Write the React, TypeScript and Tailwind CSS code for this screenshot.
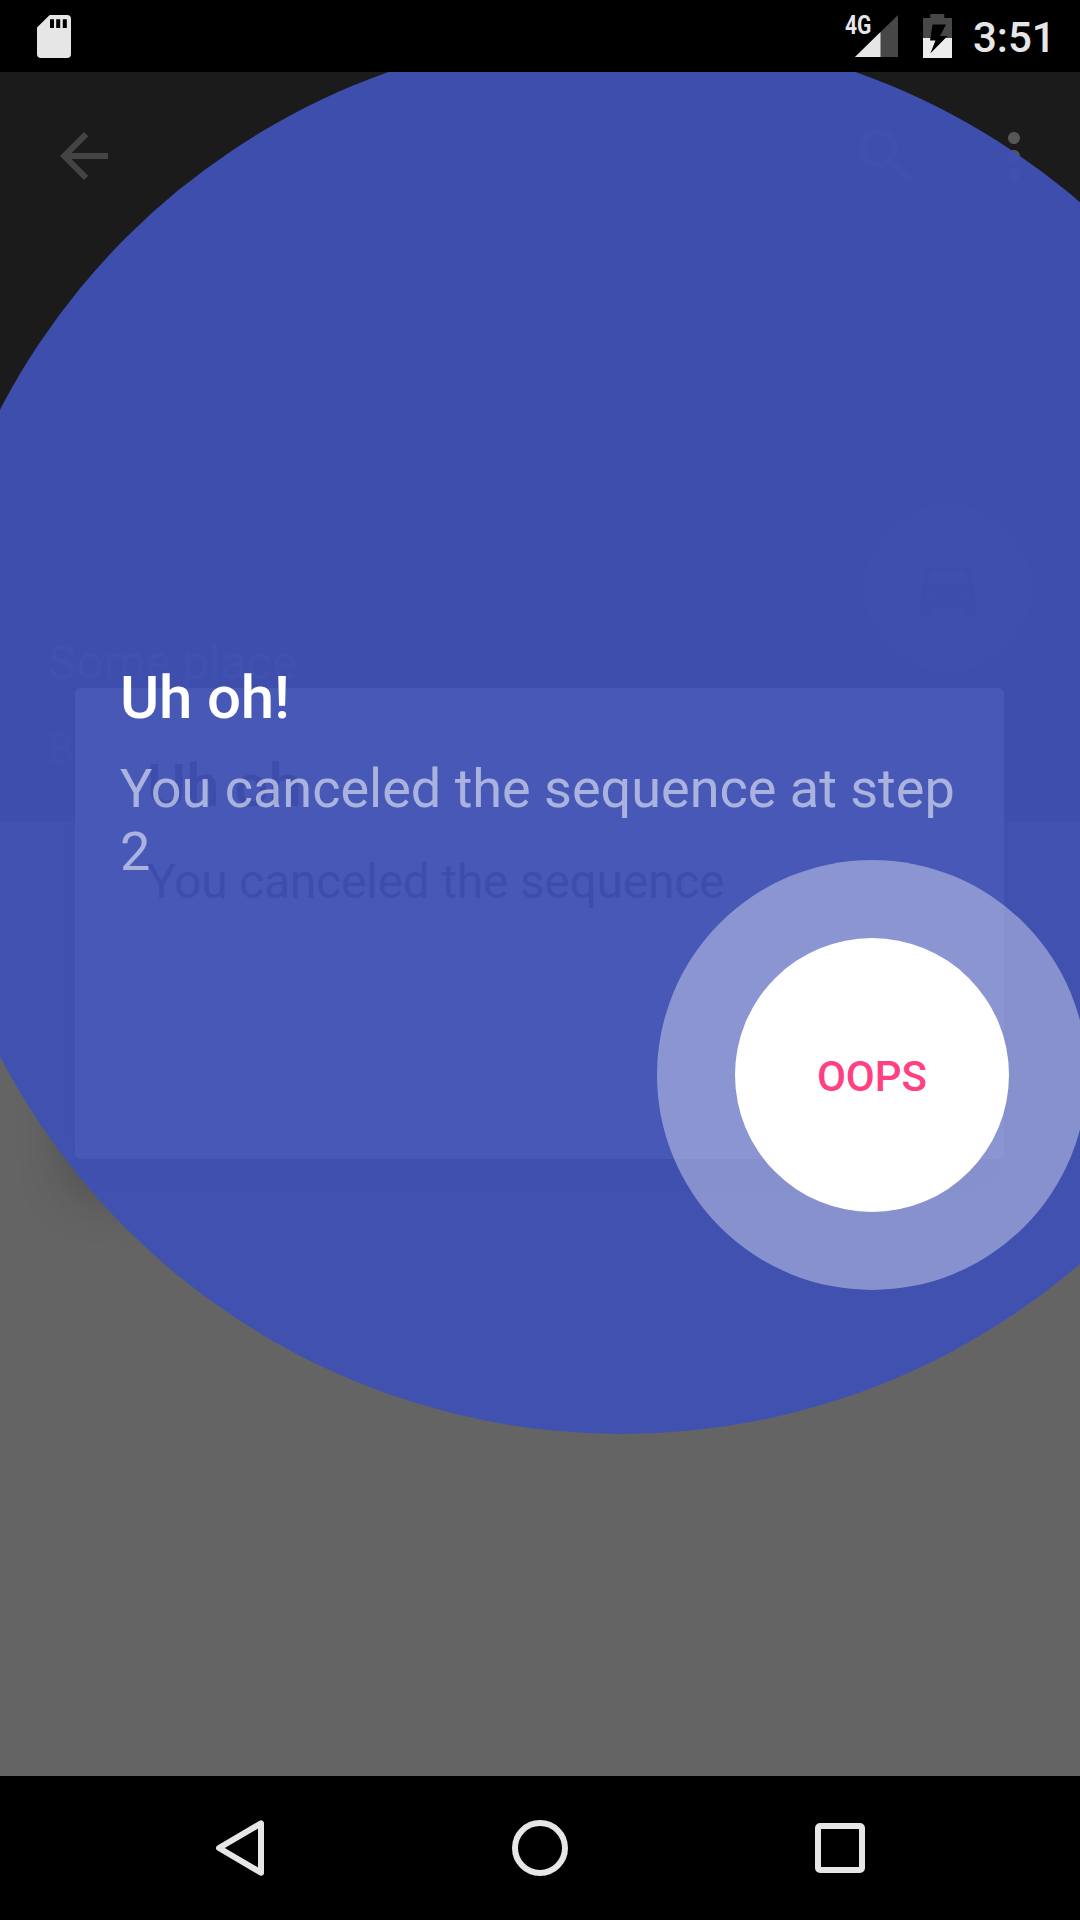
import React from "react";

function StatusBar() {
  return (
    <header className="flex h-[72px] shrink-0 items-start bg-black text-[#e6e6e6]">
      <svg className="ml-[37px] mt-[14.5px] h-[43px] w-[34px]" viewBox="0 0 34 43" fill="#e6e6e6">
        <path fillRule="evenodd" d="M12.7 0H30a4 4 0 0 1 4 4v35a4 4 0 0 1-4 4H4a4 4 0 0 1-4-4V12.5ZM13 4.3V13h4V4.3ZM19.2 4.3V13h4V4.3ZM25.8 4.3V13h4V4.3Z" />
      </svg>
      <span className="ml-[774px] mt-[10px] w-[26px] origin-left scale-x-[0.81] whitespace-nowrap text-[26px] leading-[30px] font-bold">4G</span>
      <svg className="-ml-[16px] mt-[15px] h-[42px] w-[43px]" viewBox="0 0 43 42">
        <path d="M43 0V42H0Z" fill="#474747" />
        <path d="M25.5 17V42H0Z" fill="#e6e6e6" />
      </svg>
      <svg className="ml-[25px] mt-[14px] h-[44px] w-[29px]" viewBox="0 0 29 44">
        <path d="M7.3 0h14v4H29V44H0V4h7.3Z" fill="#474747" />
        <path d="M0 24h29v20H0Z" fill="#ececec" />
        <path d="M9.5 10.5h13.5l-6 11.5h7.5L7.3 39.5 12.5 26.5H7Z" fill="#000" />
      </svg>
      <span className="ml-[21px] mt-[13px] whitespace-nowrap text-[42px] leading-[50px] font-medium">3:51</span>
    </header>
  );
}

function Page() {
  return (
    <div className="flex h-full flex-col bg-[#646464]">
      <div className="flex h-[750px] flex-col bg-[#1b1b1b]">
        <div className="flex h-[168px] items-center pl-[48px] pr-[30px]">
          <svg className="h-[72px] w-[72px]" viewBox="0 0 24 24" fill="#444444">
            <path d="M20 11H7.83l5.59-5.59L12 4l-8 8 8 8 1.41-1.41L7.83 13H20v-2z" />
          </svg>
          <svg className="ml-auto h-[72px] w-[72px]" viewBox="0 0 24 24" fill="#4d4d4d">
            <path d="M15.5 14h-.79l-.28-.27A6.47 6.47 0 0 0 16 9.5 6.5 6.5 0 1 0 9.5 16c1.61 0 3.09-.59 4.23-1.57l.27.28v.79l5 4.99L20.49 19l-4.99-5zm-6 0C7.01 14 5 11.99 5 9.5S7.01 5 9.5 5 14 7.01 14 9.5 11.99 14 9.5 14z" />
          </svg>
          <svg className="ml-[56px] h-[72px] w-[72px]" viewBox="0 0 24 24" fill="#575757">
            <path d="M12 8c1.1 0 2-.9 2-2s-.9-2-2-2-2 .9-2 2 .9 2 2 2zm0 2c-1.1 0-2 .9-2 2s.9 2 2 2 2-.9 2-2-.9-2-2-2zm0 6c-1.1 0-2 .9-2 2s.9 2 2 2 2-.9 2-2-.9-2-2-2z" />
          </svg>
        </div>
        <div className="mt-[264px] mr-[48px] flex h-[168px] w-[168px] items-center justify-center self-end rounded-full bg-[#3c2c32]">
          <svg className="h-[72px] w-[72px]" viewBox="0 0 24 24" fill="#000000">
            <path d="M18.92 6.01C18.72 5.42 18.16 5 17.5 5h-11c-.66 0-1.21.42-1.42 1.01L3 12v8c0 .55.45 1 1 1h1c.55 0 1-.45 1-1v-1h12v1c0 .55.45 1 1 1h1c.55 0 1-.45 1-1v-8l-2.08-5.99zM6.5 16c-.83 0-1.5-.67-1.5-1.5S5.67 13 6.5 13s1.5.67 1.5 1.5S7.33 16 6.5 16zm11 0c-.83 0-1.5-.67-1.5-1.5s.67-1.5 1.5-1.5 1.5.67 1.5 1.5-.67 1.5-1.5 1.5zM5 11l1.5-4.5h11L19 11H5z" />
          </svg>
        </div>
        <div className="-mt-[37px] pl-[48px] text-[#5a5a5a]">
          <p className="text-[48px] leading-[56px] tracking-[-0.2px]">Some place</p>
          <p className="mt-[33px] text-[42px] leading-[50px]">B</p>
        </div>
      </div>
    </div>
  );
}

function Dialog() {
  return (
    <div className="absolute left-[75px] top-[616px] h-[471px] w-[929px] rounded-[6px] bg-white pl-[72px] pt-[63px] text-black shadow-[0_28px_56px_rgba(0,0,0,0.32)]">
      <h2 className="text-[60px] leading-[70px] font-medium">Uh oh</h2>
      <p className="mt-[33px] text-[48px] leading-[56px] tracking-[-0.25px]">You canceled the sequence</p>
    </div>
  );
}

function TapTarget() {
  return (
    <div className="absolute inset-0 overflow-hidden">
      <div className="absolute -left-[79px] -top-[40px] h-[1402px] w-[1402px] rounded-full bg-[#3f50b4]/[0.957]" />
      <div className="absolute left-[120px] top-[591px] w-[840px]">
        <h1 className="text-[60px] leading-[70px] font-medium tracking-[-0.2px] text-white">Uh oh!</h1>
        <p className="mt-[24px] text-[54px] leading-[63px] text-white/54">You canceled the sequence at step 2</p>
      </div>
      <div className="absolute left-[657px] top-[788px] flex h-[430px] w-[430px] items-center justify-center rounded-full bg-white/37">
        <button className="h-[274px] w-[274px] rounded-full bg-white pt-[4px] text-[42px] leading-[50px] font-medium text-[#ff4081]">OOPS</button>
      </div>
    </div>
  );
}

function NavBar() {
  return (
    <nav className="flex h-[144px] shrink-0 items-center justify-center gap-[228px] bg-black">
      <svg className="h-[72px] w-[72px]" viewBox="0 0 72 72" fill="none" stroke="#e6e6e6" strokeWidth="6" strokeLinejoin="round">
        <path d="M57 11.3V60.7L15 36Z" />
      </svg>
      <svg className="h-[72px] w-[72px]" viewBox="0 0 72 72" fill="none" stroke="#e6e6e6" strokeWidth="6">
        <circle cx="36" cy="36" r="25" />
      </svg>
      <svg className="h-[72px] w-[72px]" viewBox="0 0 72 72" fill="none" stroke="#e6e6e6" strokeWidth="6">
        <rect x="14" y="14" width="44" height="44" rx="2" />
      </svg>
    </nav>
  );
}

export default function App() {
  return (
    <div className="flex h-[1920px] w-[1080px] flex-col overflow-hidden bg-black font-['Roboto',sans-serif]">
      <StatusBar />
      <main className="relative min-h-0 flex-1 overflow-hidden">
        <Page />
        <Dialog />
        <TapTarget />
      </main>
      <NavBar />
    </div>
  );
}
